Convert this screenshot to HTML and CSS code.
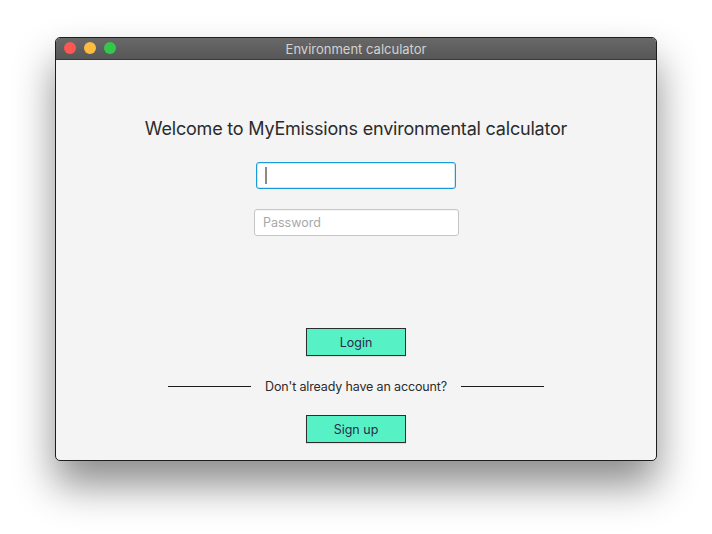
FILE: index.html
```html
<!DOCTYPE html>
<html>
<head>
<meta charset="utf-8">
<link rel="stylesheet" href="styles.css">
</head>
<body>
<div class="window">
  <div class="titlebar">
    <div class="lights">
      <span class="light red"></span>
      <span class="light yellow"></span>
      <span class="light green"></span>
    </div>
    <div class="title">Environment calculator</div>
  </div>
  <div class="content">
    <h1 class="heading">Welcome to MyEmissions environmental calculator</h1>
    <div class="field focused"><span class="caret"></span></div>
    <div class="field password"><span class="placeholder">Password</span></div>
    <button class="btn login">Login</button>
    <div class="divider">
      <span class="line"></span>
      <span class="divtext">Don't already have an account?</span>
      <span class="line"></span>
    </div>
    <button class="btn signup">Sign up</button>
  </div>
</div>
</body>
</html>
```

FILE: styles.css
```css
html, body {
  margin: 0;
  padding: 0;
  background: #ffffff;
}
body {
  width: 712px;
  height: 534px;
  padding: 37px 0 0 55px;
  box-sizing: border-box;
  font-family: Inter, "Noto Sans", sans-serif;
  overflow: hidden;
}
.window {
  width: 602px;
  height: 424px;
  box-sizing: border-box;
  border: 1px solid #1e1e1e;
  border-radius: 5px;
  background: #f4f4f4;
  box-shadow: 0 24px 40px rgba(0, 0, 0, 0.45);
  overflow: hidden;
  display: flex;
  flex-direction: column;
}
.titlebar {
  height: 22px;
  flex: none;
  background: linear-gradient(#686868, #575757);
  border-bottom: 1px solid #3a3a3a;
  box-sizing: border-box;
  position: relative;
  display: flex;
  align-items: center;
  justify-content: center;
}
.lights {
  position: absolute;
  left: 8px;
  top: 4px;
  display: flex;
  gap: 8px;
}
.light {
  width: 12px;
  height: 12px;
  border-radius: 50%;
  display: block;
}
.red { background: #fc5753; }
.yellow { background: #fdbc40; }
.green { background: #34c84a; }
.title {
  color: #d2d2d2;
  font-size: 13px;
  line-height: 16px;
}
.content {
  flex: 1;
  display: flex;
  flex-direction: column;
  align-items: center;
}
.heading {
  margin: 57px 0 0;
  font-size: 18px;
  font-weight: 400;
  line-height: 24px;
  color: #2b2b2b;
  letter-spacing: -0.2px;
}
.field {
  box-sizing: border-box;
  height: 27px;
  background: #ffffff;
  border-radius: 3px;
  display: flex;
  align-items: center;
}
.focused {
  width: 200px;
  margin-top: 21px;
  border: 1px solid #1a9bd7;
  box-shadow: inset 0 0 0 1px #cbe8f6;
  padding-left: 8px;
}
.caret {
  width: 2px;
  height: 17px;
  background: #8a8a8a;
  display: block;
}
.password {
  width: 205px;
  margin-top: 20px;
  margin-left: 1px;
  border: 1px solid #c6c6c6;
  box-shadow: inset 0 1px 1px rgba(0,0,0,0.04);
  padding-left: 8px;
}
.placeholder {
  font-size: 12.5px;
  color: #a8a8a8;
}
.btn {
  width: 100px;
  height: 28px;
  box-sizing: border-box;
  border: 1px solid #2c2c2c;
  background: #56f2c6;
  color: #2b2b46;
  font-family: Inter, "Noto Sans", sans-serif;
  font-size: 12.5px;
  padding: 0;
  box-shadow: 0 1px 1px rgba(0,0,0,0.08);
}
.login {
  margin-top: 92px;
}
.divider {
  margin-top: 21px;
  height: 18px;
  display: flex;
  align-items: center;
  gap: 14px;
}
.line {
  width: 83px;
  height: 1px;
  background: #1a1a1a;
  display: block;
}
.divtext {
  font-size: 12.5px;
  letter-spacing: -0.15px;
  color: #2b2b2b;
}
.signup {
  margin-top: 20px;
}
```
